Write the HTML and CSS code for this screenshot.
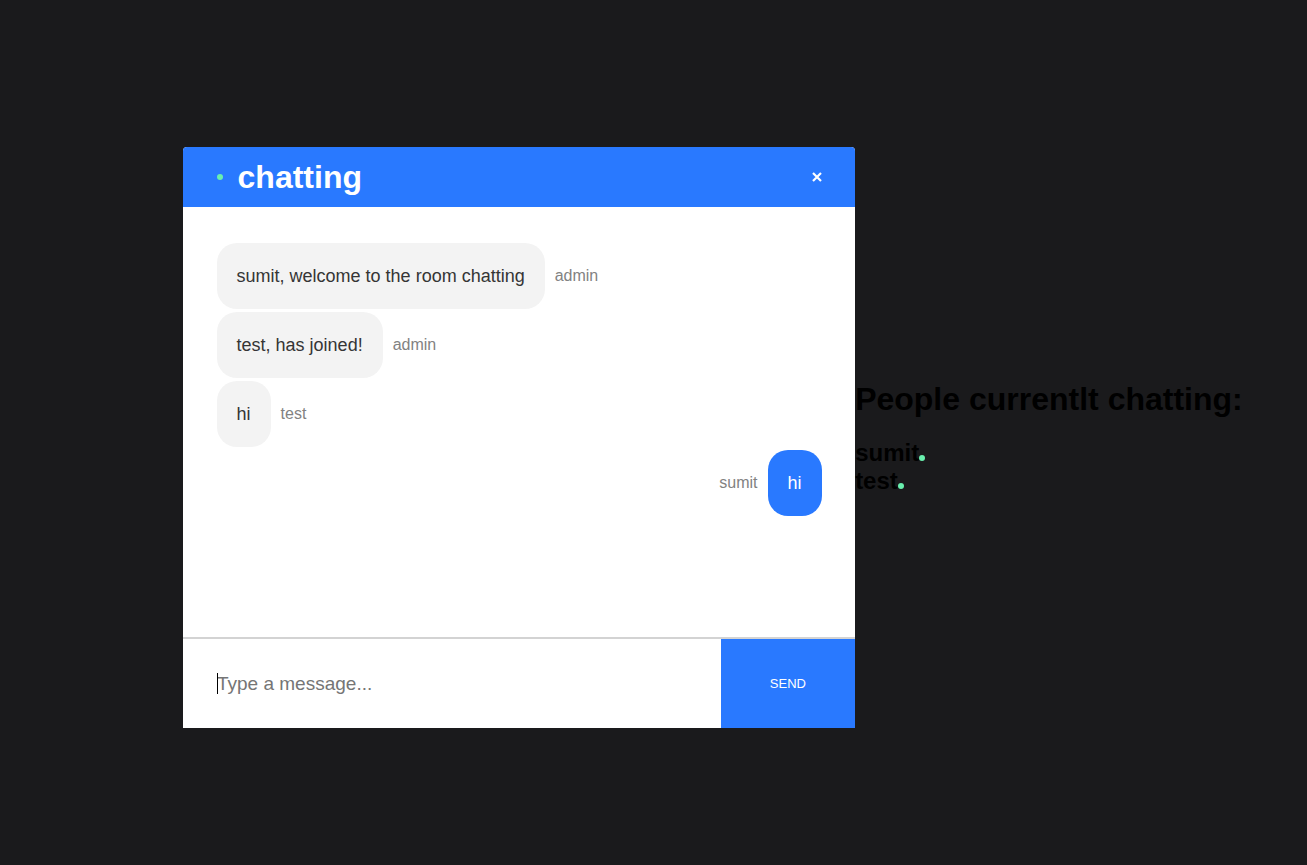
FILE: index.html
```html
<!DOCTYPE html>
<html lang="en">
<head>
<meta charset="utf-8">
<meta name="viewport" content="width=device-width, initial-scale=1">
<title>chatting</title>
<link rel="stylesheet" href="styles.css">
</head>
<body>
<div class="page">
  <main class="chat">
    <header class="info-bar">
      <span class="dot"></span>
      <h1 class="room">chatting</h1>
      <button class="close" type="button" aria-label="Close">
        <svg width="10" height="10" viewBox="0 0 10 10"><path d="M1 1L9 9M9 1L1 9" stroke="currentColor" stroke-width="2.2" fill="none"/></svg>
      </button>
    </header>
    <div class="messages">
      <div class="message"><p class="bubble">sumit, welcome to the room chatting</p><p class="sender">admin</p></div>
      <div class="message"><p class="bubble">test, has joined!</p><p class="sender">admin</p></div>
      <div class="message"><p class="bubble">hi</p><p class="sender">test</p></div>
      <div class="message own"><p class="sender">sumit</p><p class="bubble">hi</p></div>
    </div>
    <form class="composer">
      <div class="field">
        <input class="input" type="text" placeholder="Type a message..." aria-label="Message">
        <span class="caret"></span>
      </div>
      <button class="send" type="button">SEND</button>
    </form>
  </main>
  <aside class="people">
    <h2 class="people-title">People currentlt chatting:</h2>
    <ul class="people-list">
      <li class="person">sumit<span class="dot"></span></li>
      <li class="person">test<span class="dot"></span></li>
    </ul>
  </aside>
</div>
</body>
</html>
```
FILE: styles.css
```css
* {
  box-sizing: border-box;
}

body {
  margin: 0;
  background: #1a1a1c;
  font-family: Helvetica, "Liberation Sans", Arial, sans-serif;
}

h1, h2, p, ul {
  margin: 0;
  padding: 0;
}

.page {
  display: flex;
  align-items: center;
  min-height: 100vh;
  padding: 10px 0 0 14%;
}

.chat {
  display: flex;
  flex: none;
  flex-direction: column;
  width: 59.8%;
  min-height: 581px;
  background: #fff;
  border-radius: 4px 4px 0 0;
}

.info-bar {
  display: flex;
  align-items: center;
  height: 60px;
  padding: 0 5%;
  background: #2979ff;
  border-radius: 4px 4px 0 0;
  color: #fff;
}

.dot {
  display: inline-block;
  width: 6px;
  height: 6px;
  border-radius: 50%;
  background: #69f0ae;
}

.room {
  margin-left: 15px;
  font-size: 32px;
  line-height: 36px;
}

.close {
  display: flex;
  margin-left: auto;
  padding: 0;
  border: 0;
  background: none;
  color: inherit;
}

.messages {
  display: flex;
  flex: 1;
  flex-direction: column;
  gap: 3px;
  padding: 36px 5%;
}

.message {
  display: flex;
  align-items: center;
  gap: 10px;
}

.own {
  justify-content: flex-end;
}

.bubble {
  padding: 22px 20px;
  border-radius: 20px;
  background: #f3f3f3;
  color: #353535;
  font-size: 18px;
  line-height: 22px;
}

.own .bubble {
  background: #2979ff;
  color: #fff;
}

.sender {
  color: #828282;
  font-size: 16px;
  line-height: 20px;
}

.composer {
  display: flex;
  border-top: 2px solid #d3d3d3;
}

.field {
  position: relative;
  flex: 4;
}

.input {
  width: 100%;
  height: 100%;
  padding: 0 34px;
  border: 0;
  outline: none;
  background: none;
  font-family: inherit;
  font-size: 19px;
}

.input::placeholder {
  color: #757575;
}

.caret {
  position: absolute;
  top: 34px;
  left: 34px;
  width: 1px;
  height: 21px;
  background: #000;
}

.send {
  flex: 1;
  padding: 0;
  border: 0;
  background: #2979ff;
  color: #fff;
  font-family: inherit;
  font-size: 13px;
  line-height: 89px;
}

.people-title {
  margin-bottom: 22px;
  font-size: 32px;
  line-height: 36px;
  white-space: nowrap;
}

.people-list {
  list-style: none;
}

.person {
  font-size: 24px;
  font-weight: bold;
  line-height: 28px;
}
```
